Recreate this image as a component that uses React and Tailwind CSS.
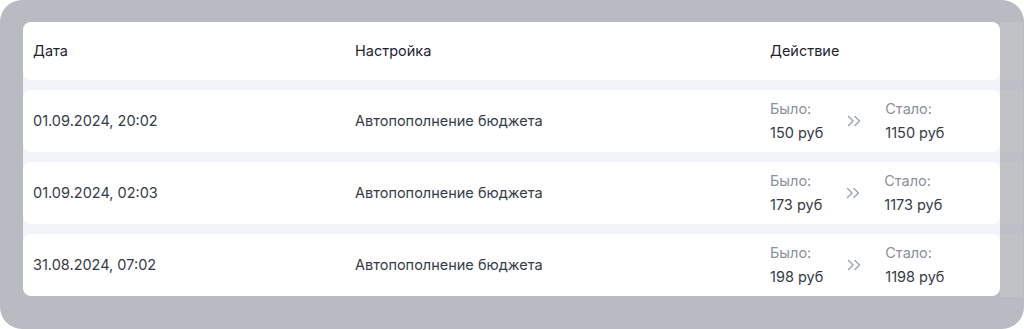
import { ChevronsRight } from 'lucide-react';

const rows = [
  { date: '01.09.2024, 20:02', setting: 'Автопополнение бюджета', before: '150 руб', after: '1150 руб' },
  { date: '01.09.2024, 02:03', setting: 'Автопополнение бюджета', before: '173 руб', after: '1173 руб' },
  { date: '31.08.2024, 07:02', setting: 'Автопополнение бюджета', before: '198 руб', after: '1198 руб' },
];

function Row({ row }) {
  return (
    <div className="h-[62px] bg-white rounded-[8px] flex items-center text-[14.5px] text-[#353b47]">
      <div className="w-[332px] pl-[10px]">{row.date}</div>
      <div className="w-[415px]">{row.setting}</div>
      <div className="flex items-center gap-[20px]">
        <div className="flex flex-col leading-[24px]">
          <span className="text-[#8b909b]">Было:</span>
          <span>{row.before}</span>
        </div>
        <ChevronsRight size={22} strokeWidth={1.6} className="text-[#9fa5b8]" />
        <div className="flex flex-col leading-[24px]">
          <span className="text-[#8b909b]">Стало:</span>
          <span>{row.after}</span>
        </div>
      </div>
    </div>
  );
}

export default function App() {
  return (
    <div
      className="w-[1024px] h-[329px] bg-[#b8bbc2] rounded-[22px] pt-[22px] pl-[23px] pr-[1px] flex items-start"
      style={{ fontFamily: 'Inter, "Noto Sans", sans-serif' }}
    >
      <div className="w-[977px] bg-[#f1f4f8] rounded-[10px] flex flex-col gap-[10px]">
        <div className="h-[58px] bg-white rounded-[8px] flex items-center text-[14.5px] text-[#1f2530]">
          <div className="w-[332px] pl-[10px]">Дата</div>
          <div className="w-[415px]">Настройка</div>
          <div>Действие</div>
        </div>
        {rows.map((row) => (
          <Row key={row.date} row={row} />
        ))}
      </div>

      {/* part of the table under the overlay */}
      <div className="flex-1 flex flex-col">
        <div className="h-[58px] bg-[#c1c2c5]" />
        <div className="h-[10px] bg-[#bcbfc5]" />
        <div className="h-[62px] bg-[#c1c2c5]" />
        <div className="h-[10px] bg-[#bcbfc5]" />
        <div className="h-[62px] bg-[#c1c2c5]" />
        <div className="h-[10px] bg-[#bcbfc5]" />
        <div className="h-[63px] bg-[#c1c2c5]" />
      </div>
    </div>
  );
}
